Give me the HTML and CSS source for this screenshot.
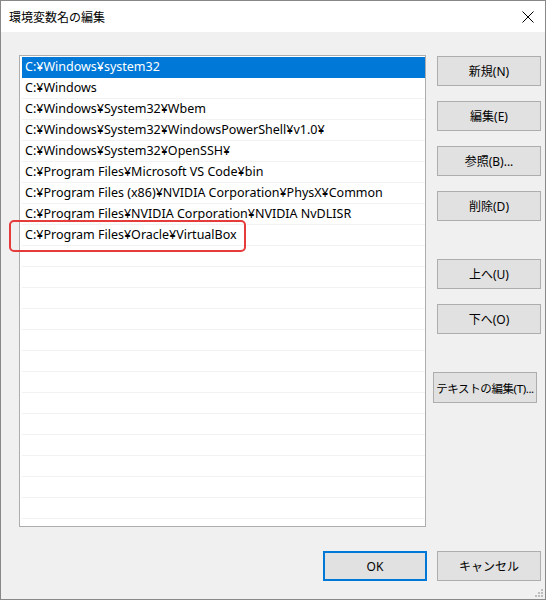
FILE: index.html
```html
<!DOCTYPE html>
<html lang="ja">

<head>
  <meta charset="UTF-8">
  <meta name="viewport" content="width=device-width, initial-scale=1.0">
  <title>環境変数名の編集</title>
  <link rel="stylesheet" href="styles.css">
</head>

<body>
  <div class="window">
    <!-- barra de titulo -->
    <div class="titlebar">
      <span class="title">環境変数名の編集</span>
      <svg class="close" width="12" height="12" viewBox="0 0 12 12">
        <path d="M0.5 0.5 L11.5 11.5 M11.5 0.5 L0.5 11.5" stroke="#000" stroke-width="1" fill="none" />
      </svg>
    </div>

    <div class="content">
      <div class="main">
        <!-- lista de caminhos -->
        <div class="listbox">
          <div class="row selected">C:¥Windows¥system32</div>
          <div class="row">C:¥Windows</div>
          <div class="row">C:¥Windows¥System32¥Wbem</div>
          <div class="row">C:¥Windows¥System32¥WindowsPowerShell¥v1.0¥</div>
          <div class="row">C:¥Windows¥System32¥OpenSSH¥</div>
          <div class="row">C:¥Program Files¥Microsoft VS Code¥bin</div>
          <div class="row">C:¥Program Files (x86)¥NVIDIA Corporation¥PhysX¥Common</div>
          <div class="row">C:¥Program Files¥NVIDIA Corporation¥NVIDIA NvDLISR</div>
          <div class="row">C:¥Program Files¥Oracle¥VirtualBox</div>
          <div class="row"></div>
          <div class="row"></div>
          <div class="row"></div>
          <div class="row"></div>
          <div class="row"></div>
          <div class="row"></div>
          <div class="row"></div>
          <div class="row"></div>
          <div class="row"></div>
          <div class="row"></div>
          <div class="row"></div>
          <div class="row"></div>
          <div class="row"></div>
          <div class="row"></div>
        </div>

        <!-- botoes do lado -->
        <div class="side">
          <button class="btn">新規(N)</button>
          <button class="btn">編集(E)</button>
          <button class="btn">参照(B)...</button>
          <button class="btn">削除(D)</button>
          <button class="btn group">上へ(U)</button>
          <button class="btn">下へ(O)</button>
          <button class="btn group text-edit">テキストの編集(T)...</button>
        </div>
      </div>

      <div class="footer">
        <button class="btn default">OK</button>
        <button class="btn">キャンセル</button>
      </div>
    </div>

    <!-- destaque vermelho -->
    <div class="mark"></div>

    <svg class="grip" width="12" height="12" viewBox="0 0 12 12">
      <rect x="8" y="2" width="2" height="2" fill="#bdbdbd" />
      <rect x="5" y="5" width="2" height="2" fill="#bdbdbd" />
      <rect x="8" y="5" width="2" height="2" fill="#bdbdbd" />
      <rect x="2" y="8" width="2" height="2" fill="#bdbdbd" />
      <rect x="5" y="8" width="2" height="2" fill="#bdbdbd" />
      <rect x="8" y="8" width="2" height="2" fill="#bdbdbd" />
    </svg>
  </div>
</body>

</html>
```

FILE: styles.css
```css
/* estilo da janela */
body {
  margin: 0;
  font-family: "Noto Sans", "Noto Sans CJK JP", sans-serif;
  color: #000;
}

.window {
  position: relative;
  width: 546px;
  height: 600px;
  box-sizing: border-box;
  border: 1px solid #888;
  background: #f0f0f0;
  overflow: hidden;
}

.titlebar {
  height: 31px;
  background: #fff;
  display: flex;
  align-items: center;
  justify-content: space-between;
  padding: 0 11px 0 8px;
}

.title {
  font-family: "Noto Sans CJK JP", sans-serif;
  font-size: 12px;
}

.close {
  display: block;
}

.content {
  padding: 23px 4px 0 18px;
}

.main {
  display: flex;
  gap: 11px;
}

.listbox {
  width: 407px;
  height: 472px;
  box-sizing: border-box;
  border: 1px solid #adadad;
  background: #fff;
  padding: 1px 0 0 2px;
  overflow: hidden;
}

.row {
  height: 20px;
  line-height: 20px;
  padding-left: 3px;
  font-size: 12.5px;
  white-space: nowrap;
  border-bottom: 1px solid #f2f2f2;
}

.row.selected {
  background: #0078d7;
  border-bottom-color: #0078d7;
  color: #fff;
}

.side {
  width: 104px;
  display: flex;
  flex-direction: column;
  gap: 15px;
  padding-top: 1px;
}

.btn {
  width: 104px;
  height: 30px;
  box-sizing: border-box;
  border: 1px solid #adadad;
  background: #e1e1e1;
  font-family: "Noto Sans", "Noto Sans CJK JP", sans-serif;
  font-size: 12px;
  color: #000;
  padding: 0;
  white-space: nowrap;
}

.btn.group {
  margin-top: 23px;
}

.btn.text-edit {
  margin-left: -4px;
  height: 31px;
  font-size: 11.5px;
  letter-spacing: -0.4px;
}

.btn.default {
  border: 2px solid #0078d7;
}

.footer {
  display: flex;
  justify-content: flex-end;
  gap: 10px;
  margin-top: 24px;
}

/* caixa vermelha em volta do VirtualBox */
.mark {
  position: absolute;
  left: 8px;
  top: 219px;
  width: 237px;
  height: 32px;
  box-sizing: border-box;
  border: 2px solid #e63b3b;
  border-radius: 5px;
}

.grip {
  position: absolute;
  right: 0;
  bottom: 0;
}
```
